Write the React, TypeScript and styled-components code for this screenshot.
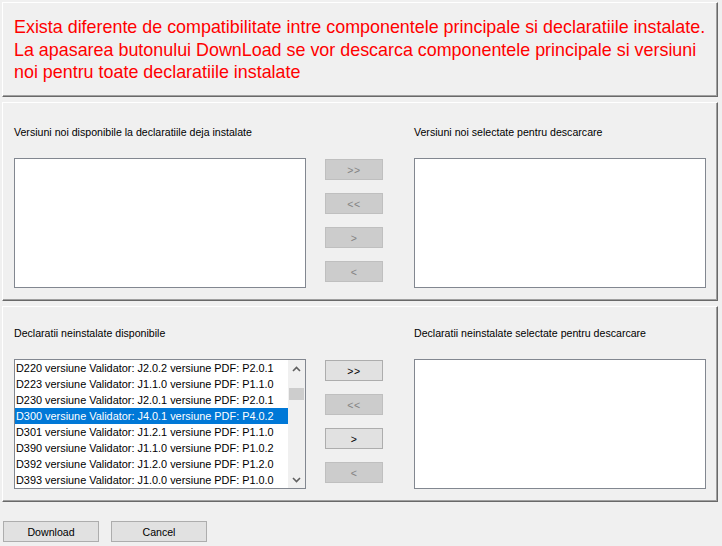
import React from "react";
import styled, { createGlobalStyle } from "styled-components";

const GlobalStyle = createGlobalStyle`
  html, body { margin: 0; padding: 0; background: #f0f0f0; }
  body { font-family: "Liberation Sans", Arial, sans-serif; }
  * { box-sizing: border-box; }
`;

const Window = styled.div`
  width: 722px;
  height: 546px;
  padding: 2px 4px 0 2px;
  display: flex;
  flex-direction: column;
  gap: 5px;
  background: #f0f0f0;
`;

const Panel = styled.section<{ $h: number; $pt: number }>`
  height: ${(p) => p.$h}px;
  padding: ${(p) => p.$pt}px 0 0 11px;
  border: 1px solid;
  border-color: #ffffff #696969 #696969 #ffffff;
  box-shadow: inset -1px -1px 0 #a0a0a0;
  background: #f0f0f0;
`;

const Warning = styled.p`
  margin: 0;
  color: #ff0000;
  font-size: 17.9px;
  line-height: 22.5px;
`;

const Grid = styled.div`
  display: grid;
  grid-template-columns: 292px 108px 292px;
  grid-template-rows: 13px 130px;
  row-gap: 19px;
`;

const Label = styled.div<{ $col: number }>`
  grid-column: ${(p) => p.$col};
  font-size: 10.6px;
  line-height: 13px;
  color: #000;
  white-space: nowrap;
`;

const ListBox = styled.div`
  grid-row: 2;
  width: 292px;
  height: 130px;
  border: 1px solid #828790;
  background: #fff;
  display: flex;
  overflow: hidden;
`;

const Items = styled.div`
  flex: 1;
  display: flex;
  flex-direction: column;
`;

const Item = styled.div<{ $selected?: boolean }>`
  height: 16px;
  line-height: 16px;
  padding-left: 1px;
  font-size: 10.9px;
  white-space: nowrap;
  color: ${(p) => (p.$selected ? "#fff" : "#000")};
  background: ${(p) => (p.$selected ? "#0078d7" : "transparent")};
`;

const ScrollBar = styled.div`
  width: 17px;
  background: #f0f0f0;
  display: flex;
  flex-direction: column;
`;

const ScrollArrow = styled.div`
  height: 17px;
  display: flex;
  align-items: center;
  justify-content: center;
`;

const Track = styled.div`
  flex: 1;
  padding: 11px 1px 0 1px;
`;

const Thumb = styled.div`
  height: 12px;
  background: #cdcdcd;
`;

const ButtonColumn = styled.div`
  grid-row: 2;
  padding: 1px 0 0 19px;
  display: flex;
  flex-direction: column;
  gap: 13px;
`;

const MoveButton = styled.button<{ $enabled?: boolean }>`
  width: 58px;
  height: 21px;
  padding: 0;
  margin: 0;
  font-family: "Liberation Sans", Arial, sans-serif;
  font-size: 10.5px;
  letter-spacing: 0.5px;
  border: 1px solid ${(p) => (p.$enabled ? "#adadad" : "#bfbfbf")};
  background: ${(p) => (p.$enabled ? "#e1e1e1" : "#cccccc")};
  color: ${(p) => (p.$enabled ? "#000" : "#838383")};
`;

const Footer = styled.div`
  margin-top: 14px;
  padding-left: 1px;
  display: flex;
  gap: 12px;
`;

const ActionButton = styled.button`
  width: 96px;
  height: 21px;
  padding: 0;
  margin: 0;
  font-family: "Liberation Sans", Arial, sans-serif;
  font-size: 10.6px;
  color: #000;
  border: 1px solid #adadad;
  background: #e1e1e1;
`;

const Chevron = ({ up }: { up?: boolean }) => (
  <svg width="9" height="6" viewBox="0 0 9 6">
    <path
      d={up ? "M1 5 L4.5 1.5 L8 5" : "M1 1 L4.5 4.5 L8 1"}
      fill="none"
      stroke="#606060"
      strokeWidth="1.6"
    />
  </svg>
);

const items = [
  "D220 versiune Validator: J2.0.2 versiune PDF: P2.0.1",
  "D223 versiune Validator: J1.1.0 versiune PDF: P1.1.0",
  "D230 versiune Validator: J2.0.1 versiune PDF: P2.0.1",
  "D300 versiune Validator: J4.0.1 versiune PDF: P4.0.2",
  "D301 versiune Validator: J1.2.1 versiune PDF: P1.1.0",
  "D390 versiune Validator: J1.1.0 versiune PDF: P1.0.2",
  "D392 versiune Validator: J1.2.0 versiune PDF: P1.2.0",
  "D393 versiune Validator: J1.0.0 versiune PDF: P1.0.0",
];

const Buttons = ({ enabled }: { enabled: boolean[] }) => (
  <ButtonColumn>
    <MoveButton $enabled={enabled[0]}>&gt;&gt;</MoveButton>
    <MoveButton $enabled={enabled[1]}>&lt;&lt;</MoveButton>
    <MoveButton $enabled={enabled[2]}>&gt;</MoveButton>
    <MoveButton $enabled={enabled[3]}>&lt;</MoveButton>
  </ButtonColumn>
);

export default function App() {
  return (
    <>
      <GlobalStyle />
      <Window>
        <Panel $h={95} $pt={13}>
          <Warning>
            Exista diferente de compatibilitate intre componentele principale si declaratiile instalate.
            <br />
            La apasarea butonului DownLoad se vor descarca componentele principale si versiuni
            <br />
            noi pentru toate declaratiile instalate
          </Warning>
        </Panel>
        <Panel $h={199} $pt={23}>
          <Grid>
            <Label $col={1}>Versiuni noi disponibile la declaratiile deja instalate</Label>
            <Label $col={3}>Versiuni noi selectate pentru descarcare</Label>
            <ListBox />
            <Buttons enabled={[false, false, false, false]} />
            <ListBox />
          </Grid>
        </Panel>
        <Panel $h={196} $pt={20}>
          <Grid>
            <Label $col={1}>Declaratii neinstalate disponibile</Label>
            <Label $col={3}>Declaratii neinstalate selectate pentru descarcare</Label>
            <ListBox>
              <Items>
                {items.map((t, i) => (
                  <Item key={t} $selected={i === 3}>
                    {t}
                  </Item>
                ))}
              </Items>
              <ScrollBar>
                <ScrollArrow>
                  <Chevron up />
                </ScrollArrow>
                <Track>
                  <Thumb />
                </Track>
                <ScrollArrow>
                  <Chevron />
                </ScrollArrow>
              </ScrollBar>
            </ListBox>
            <Buttons enabled={[true, false, true, false]} />
            <ListBox />
          </Grid>
        </Panel>
        <Footer>
          <ActionButton>Download</ActionButton>
          <ActionButton>Cancel</ActionButton>
        </Footer>
      </Window>
    </>
  );
}
